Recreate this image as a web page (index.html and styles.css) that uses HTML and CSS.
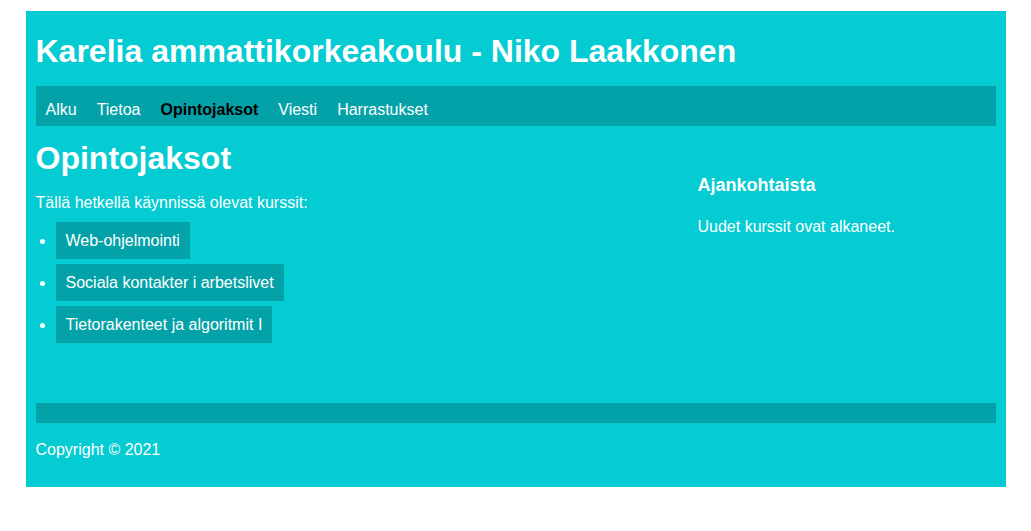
FILE: index.html
```html
<!DOCTYPE html>
<html lang="fi">
<head>
<meta charset="utf-8">
<title>Karelia ammattikorkeakoulu - Niko Laakkonen</title>
<link rel="stylesheet" href="styles.css">
</head>
<body>
<div class="page">
  <header class="site-header">
    <h1 class="site-title">Karelia ammattikorkeakoulu - Niko Laakkonen</h1>
    <nav class="nav">
      <a class="nav-link" href="#">Alku</a>
      <a class="nav-link" href="#">Tietoa</a>
      <a class="nav-link active" href="#">Opintojaksot</a>
      <a class="nav-link" href="#">Viesti</a>
      <a class="nav-link" href="#">Harrastukset</a>
    </nav>
  </header>
  <div class="content">
    <main class="main">
      <h2 class="page-title">Opintojaksot</h2>
      <p class="intro">Tällä hetkellä käynnissä olevat kurssit:</p>
      <ul class="courses">
        <li class="course"><a class="course-link" href="#">Web-ohjelmointi</a></li>
        <li class="course"><a class="course-link" href="#">Sociala kontakter i arbetslivet</a></li>
        <li class="course"><a class="course-link" href="#">Tietorakenteet ja algoritmit I</a></li>
      </ul>
    </main>
    <aside class="aside">
      <h3 class="aside-title">Ajankohtaista</h3>
      <p class="aside-text">Uudet kurssit ovat alkaneet.</p>
    </aside>
  </div>
  <footer class="footer">
    <div class="footer-bar"></div>
    <p class="copyright">Copyright © 2021</p>
  </footer>
</div>
</body>
</html>
```
FILE: styles.css
```css
html, body {
  margin: 0;
  padding: 0;
  background: #ffffff;
}

body {
  font-family: "Liberation Sans", Arial, sans-serif;
  font-size: 16px;
  color: #ffffff;
}

.page {
  width: 960px;
  margin: 11px auto 0;
  padding: 0 10px 28px;
  background: #05cbd3;
}

.site-header {
  padding-top: 22px;
}

.site-title {
  margin: 0 0 16px;
  font-size: 32px;
  line-height: 37px;
  font-weight: bold;
}

.nav {
  display: flex;
  height: 40px;
  box-sizing: border-box;
  padding: 15px 0 7px;
  background: #03a2a8;
  line-height: 18px;
}

.nav-link {
  padding: 0 10px;
  color: #ffffff;
  text-decoration: none;
}

.nav-link.active {
  color: #000000;
  font-weight: bold;
}

.content {
  display: grid;
  grid-template-columns: 662px 1fr;
}

.page-title {
  margin: 13.5px 0 0;
  font-size: 32px;
  line-height: 37px;
  font-weight: bold;
}

.intro {
  margin: 17px 0 0;
  line-height: 18px;
}

.courses {
  margin: 10.5px 0 60px;
  padding-left: 20px;
}

.course {
  margin-bottom: 5px;
  line-height: 19px;
}

.course:last-child {
  margin-bottom: 0;
}

.course-link {
  display: inline-block;
  padding: 9px 10px;
  background: #03a2a8;
  color: #ffffff;
  text-decoration: none;
}

.aside-title {
  margin: 49.3px 0 0;
  font-size: 18px;
  line-height: 21px;
  font-weight: bold;
}

.aside-text {
  margin: 22px 0 0;
  line-height: 18px;
}

.footer-bar {
  height: 20px;
  background: #03a2a8;
}

.copyright {
  margin: 17.5px 0 0;
  line-height: 18px;
}
```
